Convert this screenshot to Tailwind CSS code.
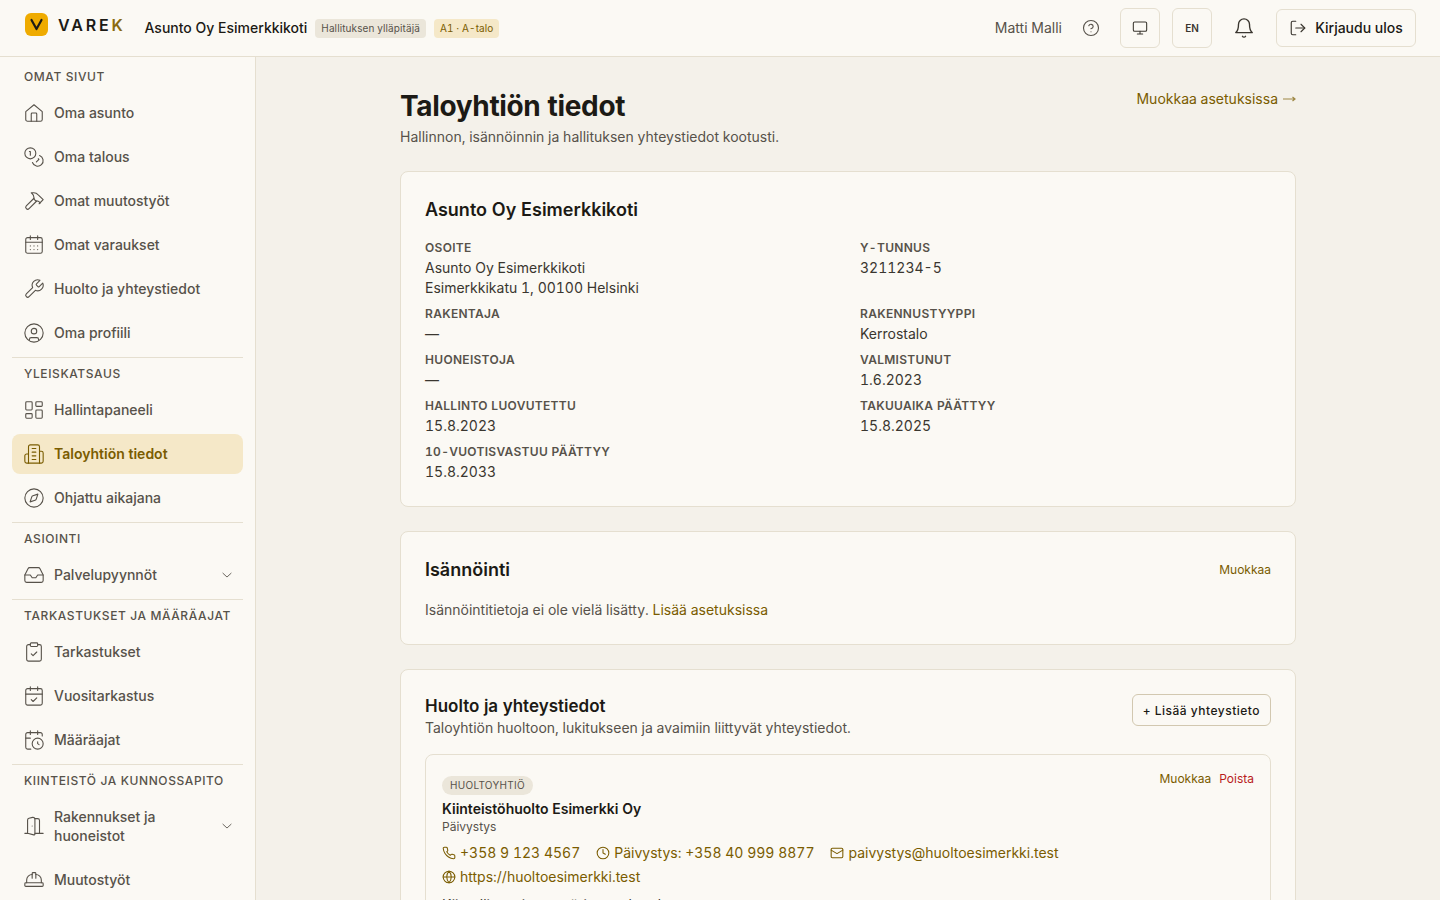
<!DOCTYPE html>
<html lang="fi">
<head>
<meta charset="utf-8">
<script src="https://cdn.jsdelivr.net/npm/@tailwindcss/browser@4"></script>
<title>Taloyhtiön tiedot</title>
</head>
<body class="h-[900px] overflow-hidden bg-[#f4f1ea] font-['Inter',sans-serif] tabular-nums text-[#1c1a15]">
<header class="h-[57px] bg-[#fbf9f4] border-b border-[#e5dfd0] flex items-center pl-[25px] pr-6">
  <div class="flex items-center mb-[7px]">
    <div class="w-[23px] h-[23px] rounded-[6px] bg-[#efab00] flex items-center justify-center">
      <svg width="15" height="13" viewBox="0 0 15 13" fill="none" stroke="#1c1a15" stroke-width="2.2" stroke-linecap="round" stroke-linejoin="round"><path d="M2.500 2l5 9 5-9"/></svg>
    </div>
    <div class="ml-[10px] text-[16px] leading-[20px] font-semibold tracking-[2.8px] text-[#1c1a15]">VARE<span class="text-[#8a6a10]">K</span></div>
  </div>
  <div class="ml-[19px] text-sm font-medium">Asunto Oy Esimerkkikoti</div>
  <span class="ml-2 h-[19px] px-[6px] rounded bg-[#ebe6da] text-[10px] tracking-[0.1px] leading-[19px] text-[#57524a]">Hallituksen ylläpitäjä</span>
  <span class="ml-2 h-[19px] px-[6px] rounded bg-[#f5e8c8] text-[10px] tracking-[0.1px] leading-[19px] text-[#7a5c00]">A1 · A-talo</span>
  <div class="ml-auto text-sm text-[#57524a]">Matti Malli</div>
  <svg class="ml-5" width="18" height="18" viewBox="0 0 24 24" fill="none" stroke="#57524a" stroke-width="1.5" stroke-linecap="round" stroke-linejoin="round"><circle cx="12" cy="12" r="10"/><path d="M9.100 9a3 3 0 0 1 5.800 1c0 2-3 3-3 3"/><path d="M12 17h.01"/></svg>
  <button class="ml-5 w-10 h-10 rounded-md border border-[#e5dfd0] flex items-center justify-center">
    <svg width="16" height="16" viewBox="0 0 24 24" fill="none" stroke="#3a362f" stroke-width="1.600" stroke-linecap="round" stroke-linejoin="round"><rect x="2" y="3" width="20" height="14" rx="2"/><path d="M8 21h8M12 17v4"/></svg>
  </button>
  <button class="ml-3 w-10 h-10 rounded-md border border-[#e5dfd0] text-[10px] font-semibold text-[#3a362f]">EN</button>
  <svg class="ml-[21px]" width="22" height="22" viewBox="0 0 24 24" fill="none" stroke="#3a362f" stroke-width="1.5" stroke-linecap="round" stroke-linejoin="round"><path d="M6 8a6 6 0 0 1 12 0c0 7 3 9 3 9H3s3-2 3-9"/><path d="M10.300 21a1.940 1.940 0 0 0 3.400 0"/></svg>
  <button class="ml-[21px] h-[38px] w-[140px] rounded-md border border-[#e5dfd0] flex items-center justify-center gap-2 text-sm font-medium">
    <svg width="18" height="18" viewBox="0 0 24 24" fill="none" stroke="#3a362f" stroke-width="1.5" stroke-linecap="round" stroke-linejoin="round"><path d="M9 21H5a2 2 0 0 1-2-2V5a2 2 0 0 1 2-2h4"/><path d="M16 17l5-5-5-5"/><path d="M21 12H9"/></svg>
    Kirjaudu ulos
  </button>
</header>
<div class="flex h-[843px]">
  <aside class="w-[256px] shrink-0 bg-[#fbf9f4] border-r border-[#e5dfd0] px-3 overflow-hidden text-sm text-[#57524a]">
    <div class="px-3 pt-[13px] pb-[6px] h-[36px] text-xs tracking-[0.6px] font-medium leading-[14px]">OMAT SIVUT</div>
    <a class="h-10 mb-1 pl-[11px] pr-3 flex items-center gap-[9px] font-medium"><svg width="22" height="22" viewBox="0 0 24 24" fill="none" stroke="currentColor" stroke-width="1.200" stroke-linecap="round" stroke-linejoin="round"><path d="M3 10.500 12 3l9 7.500V19a2 2 0 0 1-2 2H5a2 2 0 0 1-2-2z"/><path d="M9 21v-8a1 1 0 0 1 1-1h4a1 1 0 0 1 1 1v8"/></svg>Oma asunto</a>
    <a class="h-10 mb-1 pl-[11px] pr-3 flex items-center gap-[9px] font-medium"><svg width="22" height="22" viewBox="0 0 24 24" fill="none" stroke="currentColor" stroke-width="1.200" stroke-linecap="round" stroke-linejoin="round"><circle cx="8" cy="8" r="6"/><path d="M18.100 10.400A6 6 0 1 1 10.300 18"/><path d="M7 6h1v4"/><path d="m16.700 13.900.7.7-2.800 2.800"/></svg>Oma talous</a>
    <a class="h-10 mb-1 pl-[11px] pr-3 flex items-center gap-[9px] font-medium"><svg width="22" height="22" viewBox="0 0 24 24" fill="none" stroke="currentColor" stroke-width="1.200" stroke-linecap="round" stroke-linejoin="round"><path d="m15 12-8.400 8.400a2.100 2.100 0 0 1-3-3L12 9"/><path d="M17.600 15 22 10.600l-5.400-5.400A7 7 0 0 0 11.700 3H9l.9.8A6.500 6.500 0 0 1 12 8.600V10l2 2h1.400c.9 0 1.700.3 2.300.9l1.300 1.300"/></svg>Omat muutostyöt</a>
    <a class="h-10 mb-1 pl-[11px] pr-3 flex items-center gap-[9px] font-medium"><svg width="22" height="22" viewBox="0 0 24 24" fill="none" stroke="currentColor" stroke-width="1.200" stroke-linecap="round" stroke-linejoin="round"><rect x="3" y="4" width="18" height="17" rx="2"/><path d="M8 2v4M16 2v4M3 9h18"/><path d="M8 13h.01M12 13h.01M16 13h.01M8 17h.01M12 17h.01M16 17h.01"/></svg>Omat varaukset</a>
    <a class="h-10 mb-1 pl-[11px] pr-3 flex items-center gap-[9px] font-medium"><svg width="22" height="22" viewBox="0 0 24 24" fill="none" stroke="currentColor" stroke-width="1.200" stroke-linecap="round" stroke-linejoin="round"><path d="M14.700 6.300a1 1 0 0 0 0 1.400l1.600 1.600a1 1 0 0 0 1.400 0l3.770-3.770a6 6 0 0 1-7.940 7.940l-6.910 6.910a2.120 2.120 0 0 1-3-3l6.910-6.910a6 6 0 0 1 7.940-7.940z"/></svg>Huolto ja yhteystiedot</a>
    <a class="h-10 pl-[11px] pr-3 flex items-center gap-[9px] font-medium"><svg width="22" height="22" viewBox="0 0 24 24" fill="none" stroke="currentColor" stroke-width="1.200" stroke-linecap="round" stroke-linejoin="round"><circle cx="12" cy="12" r="10"/><circle cx="12" cy="10" r="3"/><path d="M7 19.700V19a2 2 0 0 1 2-2h6a2 2 0 0 1 2 2v.7"/></svg>Oma profiili</a>
    <div class="mt-1 border-t border-[#e5dfd0] px-3 pt-[9px] h-[33px] text-xs tracking-[0.6px] font-medium leading-[14px]">YLEISKATSAUS</div>
    <a class="h-10 mb-1 pl-[11px] pr-3 flex items-center gap-[9px] font-medium"><svg width="22" height="22" viewBox="0 0 24 24" fill="none" stroke="currentColor" stroke-width="1.200" stroke-linecap="round" stroke-linejoin="round"><rect x="3" y="3" width="7" height="9" rx="1"/><rect x="14" y="3" width="7" height="5" rx="1"/><rect x="14" y="12" width="7" height="9" rx="1"/><rect x="3" y="16" width="7" height="5" rx="1"/></svg>Hallintapaneeli</a>
    <a class="h-10 mb-1 pl-[11px] pr-3 flex items-center gap-[9px] font-semibold rounded-lg bg-[#f5e8c8] text-[#7a5c00]"><svg width="22" height="22" viewBox="0 0 24 24" fill="none" stroke="currentColor" stroke-width="1.200" stroke-linecap="round" stroke-linejoin="round"><path d="M6 22V4a2 2 0 0 1 2-2h8a2 2 0 0 1 2 2v18z"/><path d="M6 12H4a2 2 0 0 0-2 2v6a2 2 0 0 0 2 2h2"/><path d="M18 9h2a2 2 0 0 1 2 2v9a2 2 0 0 1-2 2h-2"/><path d="M10 6h4M10 10h4M10 14h4M10 18h4"/></svg>Taloyhtiön tiedot</a>
    <a class="h-10 pl-[11px] pr-3 flex items-center gap-[9px] font-medium"><svg width="22" height="22" viewBox="0 0 24 24" fill="none" stroke="currentColor" stroke-width="1.200" stroke-linecap="round" stroke-linejoin="round"><circle cx="12" cy="12" r="10"/><path d="m16.240 7.760-1.800 5.400a2 2 0 0 1-1.280 1.280l-5.400 1.800 1.800-5.400a2 2 0 0 1 1.280-1.280z"/></svg>Ohjattu aikajana</a>
    <div class="mt-1 border-t border-[#e5dfd0] px-3 pt-[9px] h-[33px] text-xs tracking-[0.6px] font-medium leading-[14px]">ASIOINTI</div>
    <a class="h-10 pl-[11px] pr-[9px] flex items-center gap-[9px] font-medium"><svg width="22" height="22" viewBox="0 0 24 24" fill="none" stroke="currentColor" stroke-width="1.200" stroke-linecap="round" stroke-linejoin="round"><path d="M22 12h-6l-2 3h-4l-2-3H2"/><path d="M5.450 5.110 2 12v6a2 2 0 0 0 2 2h16a2 2 0 0 0 2-2v-6l-3.450-6.890A2 2 0 0 0 16.760 4H7.240a2 2 0 0 0-1.790 1.110z"/></svg>Palvelupyynnöt<svg class="ml-auto" width="14" height="14" viewBox="0 0 24 24" fill="none" stroke="currentColor" stroke-width="1.500" stroke-linecap="round" stroke-linejoin="round"><path d="m5 9 7 6.500L19 9"/></svg></a>
    <div class="mt-1 border-t border-[#e5dfd0] px-3 pt-[9px] h-[33px] text-xs tracking-[0.6px] font-medium leading-[14px] whitespace-nowrap">TARKASTUKSET JA MÄÄRÄAJAT</div>
    <a class="h-10 mb-1 pl-[11px] pr-3 flex items-center gap-[9px] font-medium"><svg width="22" height="22" viewBox="0 0 24 24" fill="none" stroke="currentColor" stroke-width="1.200" stroke-linecap="round" stroke-linejoin="round"><rect x="8" y="2" width="8" height="4" rx="1"/><path d="M16 4h2a2 2 0 0 1 2 2v14a2 2 0 0 1-2 2H6a2 2 0 0 1-2-2V6a2 2 0 0 1 2-2h2"/><path d="m9 14 2 2 4-4"/></svg>Tarkastukset</a>
    <a class="h-10 mb-1 pl-[11px] pr-3 flex items-center gap-[9px] font-medium"><svg width="22" height="22" viewBox="0 0 24 24" fill="none" stroke="currentColor" stroke-width="1.200" stroke-linecap="round" stroke-linejoin="round"><rect x="3" y="4" width="18" height="18" rx="2"/><path d="M8 2v4M16 2v4M3 10h18"/><path d="m9 16 2 2 4-4"/></svg>Vuositarkastus</a>
    <a class="h-10 pl-[11px] pr-3 flex items-center gap-[9px] font-medium"><svg width="22" height="22" viewBox="0 0 24 24" fill="none" stroke="currentColor" stroke-width="1.200" stroke-linecap="round" stroke-linejoin="round"><path d="M21 7.500V6a2 2 0 0 0-2-2H5a2 2 0 0 0-2 2v14a2 2 0 0 0 2 2h3.500"/><path d="M16 2v4M8 2v4M3 10h5"/><circle cx="16" cy="16" r="6"/><path d="M16 14v2l1.500 1"/></svg>Määräajat</a>
    <div class="mt-1 border-t border-[#e5dfd0] px-3 pt-[9px] h-[33px] text-xs tracking-[0.6px] font-medium leading-[14px] whitespace-nowrap">KIINTEISTÖ JA KUNNOSSAPITO</div>
    <a class="h-[58px] mb-[5px] pl-[11px] pr-[9px] flex items-center gap-[9px] font-medium leading-[19px]"><svg class="shrink-0" width="22" height="22" viewBox="0 0 24 24" fill="none" stroke="currentColor" stroke-width="1.200" stroke-linecap="round" stroke-linejoin="round"><path d="M13 4h3a2 2 0 0 1 2 2v14"/><path d="M2 20h3"/><path d="M13 20h9"/><path d="M10 12v.01"/><path d="M13 4.562v16.157a1 1 0 0 1-1.242.97L5 20V5.562a2 2 0 0 1 1.515-1.940l4-1A2 2 0 0 1 13 4.561Z"/></svg><span class="w-[130px]">Rakennukset ja huoneistot</span><svg class="ml-auto shrink-0" width="14" height="14" viewBox="0 0 24 24" fill="none" stroke="currentColor" stroke-width="1.500" stroke-linecap="round" stroke-linejoin="round"><path d="m5 9 7 6.500L19 9"/></svg></a>
    <a class="h-10 pl-[11px] pr-3 flex items-center gap-[9px] font-medium"><svg width="22" height="22" viewBox="0 0 24 24" fill="none" stroke="currentColor" stroke-width="1.200" stroke-linecap="round" stroke-linejoin="round"><rect x="2" y="15" width="20" height="4" rx="1"/><path d="M10 10V5a1 1 0 0 1 1-1h2a1 1 0 0 1 1 1v5"/><path d="M4 15v-3a6 6 0 0 1 6-6"/><path d="M14 6a6 6 0 0 1 6 6v3"/></svg>Muutostyöt</a>
  </aside>
  <main class="flex-1 overflow-hidden">
    <div class="w-[896px] mx-auto pt-[32px]">
      <div class="flex justify-between items-start mb-[24px]">
        <div>
          <h1 class="text-[28px] leading-[34px] font-bold tracking-[-0.35px]">Taloyhtiön tiedot</h1>
          <p class="mt-[4px] text-sm leading-[20px] text-[#57524a]">Hallinnon, isännöinnin ja hallituksen yhteystiedot kootusti.</p>
        </div>
        <a class="flex items-center gap-1 text-sm leading-[20px] text-[#7a5c00]">Muokkaa asetuksissa<svg class="opacity-70 -mt-[1px]" width="14" height="8" viewBox="0 0 14 8" fill="none" stroke="currentColor" stroke-width="1.200"><path d="M1 4h12M10.500 2l2.500 2-2.500 2"/></svg></a>
      </div>
      <section class="bg-[#fbf9f4] border border-[#e5dfd0] rounded-lg p-6 mb-6">
        <h2 class="text-lg leading-[28px] font-semibold">Asunto Oy Esimerkkikoti</h2>
        <div class="mt-4 grid grid-cols-2 gap-x-6 gap-y-2 text-sm leading-[20px] text-[#3a362f]">
          <div><div class="text-xs leading-[16px] font-semibold tracking-[0.3px] text-[#57524a]">OSOITE</div><div class="mt-[2px]">Asunto Oy Esimerkkikoti<br>Esimerkkikatu 1, 00100 Helsinki</div></div>
          <div><div class="text-xs leading-[16px] font-semibold tracking-[0.3px] text-[#57524a]">Y-TUNNUS</div><div class="mt-[2px]">3211234-5</div></div>
          <div><div class="text-xs leading-[16px] font-semibold tracking-[0.3px] text-[#57524a]">RAKENTAJA</div><div class="mt-[2px]">—</div></div>
          <div><div class="text-xs leading-[16px] font-semibold tracking-[0.3px] text-[#57524a]">RAKENNUSTYYPPI</div><div class="mt-[2px]">Kerrostalo</div></div>
          <div><div class="text-xs leading-[16px] font-semibold tracking-[0.3px] text-[#57524a]">HUONEISTOJA</div><div class="mt-[2px]">—</div></div>
          <div><div class="text-xs leading-[16px] font-semibold tracking-[0.3px] text-[#57524a]">VALMISTUNUT</div><div class="mt-[2px]">1.6.2023</div></div>
          <div><div class="text-xs leading-[16px] font-semibold tracking-[0.3px] text-[#57524a]">HALLINTO LUOVUTETTU</div><div class="mt-[2px]">15.8.2023</div></div>
          <div><div class="text-xs leading-[16px] font-semibold tracking-[0.3px] text-[#57524a]">TAKUUAIKA PÄÄTTYY</div><div class="mt-[2px]">15.8.2025</div></div>
          <div><div class="text-xs leading-[16px] font-semibold tracking-[0.3px] text-[#57524a]">10-VUOTISVASTUU PÄÄTTYY</div><div class="mt-[2px]">15.8.2033</div></div>
        </div>
      </section>
      <section class="bg-[#fbf9f4] border border-[#e5dfd0] rounded-lg p-6 mb-6">
        <div class="flex justify-between items-center"><h2 class="text-lg leading-[28px] font-semibold">Isännöinti</h2><a class="text-xs text-[#7a5c00]">Muokkaa</a></div>
        <p class="mt-[16px] text-sm leading-[20px] text-[#57524a]">Isännöintitietoja ei ole vielä lisätty. <a class="text-[#7a5c00]">Lisää asetuksissa</a></p>
      </section>
      <section class="bg-[#fbf9f4] border border-[#e5dfd0] rounded-lg p-6">
        <div class="flex justify-between items-start">
          <div><h2 class="text-[17px] leading-[24px] font-semibold">Huolto ja yhteystiedot</h2><p class="text-sm leading-[20px] text-[#57524a]">Taloyhtiön huoltoon, lukitukseen ja avaimiin liittyvät yhteystiedot.</p></div>
          <button class="h-8 px-[10px] pt-[1px] rounded-md border border-[#d2c8b0] text-xs font-medium tracking-[0.5px]">+ Lisää yhteystieto</button>
        </div>
        <div class="relative mt-[16px] border border-[#e5dfd0] rounded-lg px-4 pt-[21px]">
          <div class="absolute top-4 right-4 flex gap-2 text-xs"><a class="text-[#7a5c00]">Muokkaa</a><a class="text-[#b91c1c]">Poista</a></div>
          <span class="block w-fit h-[19px] px-2 rounded-full bg-[#ebe6da] text-[10px] leading-[19px] tracking-[0.3px] text-[#57524a]">HUOLTOYHTIÖ</span>
          <div class="mt-[4px] text-sm leading-[20px] font-semibold">Kiinteistöhuolto Esimerkki Oy</div>
          <div class="text-xs leading-[16px] text-[#57524a]">Päivystys</div>
          <div class="mt-[8px] flex flex-wrap gap-x-4 gap-y-1 text-sm leading-[20px] text-[#7a5c00]">
            <a class="flex items-center gap-1"><svg width="14" height="14" viewBox="0 0 24 24" fill="none" stroke="currentColor" stroke-width="1.800" stroke-linecap="round" stroke-linejoin="round"><path d="M22 16.920v3a2 2 0 0 1-2.180 2 19.790 19.790 0 0 1-8.630-3.070 19.500 19.500 0 0 1-6-6 19.790 19.790 0 0 1-3.070-8.670A2 2 0 0 1 4.110 2h3a2 2 0 0 1 2 1.720c.13.96.36 1.900.7 2.810a2 2 0 0 1-.45 2.110L8.090 9.910a16 16 0 0 0 6 6l1.270-1.270a2 2 0 0 1 2.110-.45c.91.34 1.850.57 2.810.7A2 2 0 0 1 22 16.920z"/></svg>+358 9 123 4567</a>
            <a class="flex items-center gap-1"><svg width="14" height="14" viewBox="0 0 24 24" fill="none" stroke="currentColor" stroke-width="1.800" stroke-linecap="round" stroke-linejoin="round"><circle cx="12" cy="12" r="10"/><path d="M12 6v6l4 2"/></svg>Päivystys: +358 40 999 8877</a>
            <a class="flex items-center gap-1"><svg width="14" height="14" viewBox="0 0 24 24" fill="none" stroke="currentColor" stroke-width="1.800" stroke-linecap="round" stroke-linejoin="round"><rect x="2" y="4" width="20" height="16" rx="2"/><path d="m22 7-10 6L2 7"/></svg>paivystys@huoltoesimerkki.test</a>
            <a class="flex items-center gap-1"><svg width="14" height="14" viewBox="0 0 24 24" fill="none" stroke="currentColor" stroke-width="1.800" stroke-linecap="round" stroke-linejoin="round"><circle cx="12" cy="12" r="10"/><path d="M2 12h20"/><path d="M12 2a15 15 0 0 1 0 20 15 15 0 0 1 0-20"/></svg>https://huoltoesimerkki.test</a>
          </div>
          <p class="mt-[8px] text-sm leading-[20px] text-[#3a362f]">Kiireelliset viat ympäri vuorokauden.</p>
        </div>
      </section>
    </div>
  </main>
</div>
</body>
</html>
